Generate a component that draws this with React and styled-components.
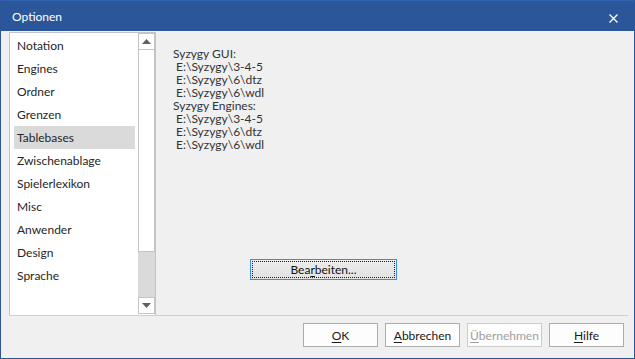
import React from "react";
import styled, { createGlobalStyle } from "styled-components";

const Global = createGlobalStyle`
  html, body { margin: 0; padding: 0; background: #f0f0f0; }
  body { font-family: "Segoe UI", Lato, "Noto Sans", sans-serif; font-size: 12px; color: #1a1a1a; }
  * { box-sizing: border-box; }
`;

const Window = styled.div`
  width: 635px;
  height: 359px;
  display: flex;
  flex-direction: column;
  background: #f0f0f0;
  border: 1px solid #2b579a;
  border-top: none;
`;

const TitleBar = styled.div`
  height: 31px;
  flex: none;
  background: #2b579a;
  border-top: 1px solid #2e63b0;
  display: flex;
  align-items: center;
  justify-content: space-between;
  padding: 0 16px 0 11px;
  color: #fff;
`;

const Title = styled.span`
  font-size: 12px;
`;

const CloseBtn = styled.svg`
  width: 9px;
  height: 9px;
  margin-top: 5px;
`;

const Main = styled.div`
  flex: 1;
  display: flex;
  flex-direction: column;
  padding: 1px 6px 0 8px;
`;

const Content = styled.div`
  height: 284px;
  display: flex;
  border-bottom: 1px solid #cfcfcf;
`;

const ListBox = styled.div`
  width: 147px;
  height: 283px;
  display: flex;
  background: #fff;
  border: 1px solid #c4c4c4;
  border-bottom: none;
`;

const Items = styled.ul`
  list-style: none;
  margin: 0;
  padding: 1px 3px 0 4px;
  flex: 1;
`;

const Item = styled.li`
  height: 23px;
  line-height: 23px;
  padding-left: 3px;
  background: ${(p) => (p.$selected ? "#dadada" : "transparent")};
  color: #262626;
`;

const ScrollBar = styled.div`
  width: 17px;
  display: flex;
  flex-direction: column;
  padding-bottom: 1px;
`;

const ScrollBtn = styled.div`
  height: 17px;
  flex: none;
  border: 1px solid #c4c4c4;
  background: #fff;
  display: flex;
  align-items: center;
  justify-content: center;
`;

const Thumb = styled.div`
  height: 202px;
  flex: none;
  border: 1px solid #c4c4c4;
  border-top: none;
  background: #fff;
`;

const Track = styled.div`
  flex: 1;
  background: #dadada;
`;

const Panel = styled.div`
  flex: 1;
  display: flex;
  flex-direction: column;
  padding: 15px 0 0 17px;
`;

const Paths = styled.div`
  line-height: 13px;
  color: #333;
  white-space: pre;
`;

const EditRow = styled.div`
  margin-top: 108px;
  padding-left: 77px;
`;

const EditButton = styled.button`
  width: 147px;
  height: 21px;
  padding: 1px;
  border: 1px solid #3c8ee0;
  background: linear-gradient(#ececec, #e2e2e2);
  font: inherit;
  color: #111;
  display: flex;
`;

const Focus = styled.span`
  flex: 1;
  border: 1px dotted #222;
  display: flex;
  align-items: center;
  justify-content: center;
  line-height: 1;
`;

const Footer = styled.div`
  display: flex;
  justify-content: flex-end;
  gap: 7px;
  padding: 7px 4px 0 0;
`;

const Btn = styled.button`
  width: 75px;
  height: 24px;
  border: 1px solid ${(p) => (p.disabled ? "#cccccc" : "#adadad")};
  background: #fdfdfd;
  font: inherit;
  color: ${(p) => (p.disabled ? "#a0a0a0" : "#1a1a1a")};
  padding: 0;
`;

const U = styled.span`
  text-decoration: underline;
  text-underline-offset: 2px;
`;

const Up = () => (
  <svg width="9" height="5" viewBox="0 0 9 5"><path d="M0 5 L4.5 0 L9 5 Z" fill="#606060" /></svg>
);
const Down = () => (
  <svg width="9" height="5" viewBox="0 0 9 5"><path d="M0 0 L4.5 5 L9 0 Z" fill="#606060" /></svg>
);

const items = ["Notation", "Engines", "Ordner", "Grenzen", "Tablebases", "Zwischenablage", "Spielerlexikon", "Misc", "Anwender", "Design", "Sprache"];

const text = `Syzygy GUI:
 E:\\Syzygy\\3-4-5
 E:\\Syzygy\\6\\dtz
 E:\\Syzygy\\6\\wdl
Syzygy Engines:
 E:\\Syzygy\\3-4-5
 E:\\Syzygy\\6\\dtz
 E:\\Syzygy\\6\\wdl`;

export default function App() {
  return (
    <>
      <Global />
      <Window>
        <TitleBar>
          <Title>Optionen</Title>
          <CloseBtn viewBox="0 0 9 9"><path d="M0.5 0.5 L8.5 8.5 M8.5 0.5 L0.5 8.5" stroke="#fff" strokeWidth="1.3" /></CloseBtn>
        </TitleBar>
        <Main>
          <Content>
            <ListBox>
              <Items>
                {items.map((it) => (
                  <Item key={it} $selected={it === "Tablebases"}>{it}</Item>
                ))}
              </Items>
              <ScrollBar>
                <ScrollBtn><Up /></ScrollBtn>
                <Thumb />
                <Track />
                <ScrollBtn><Down /></ScrollBtn>
              </ScrollBar>
            </ListBox>
            <Panel>
              <Paths>{text}</Paths>
              <EditRow>
                <EditButton><Focus>Bea<U>r</U>beiten...</Focus></EditButton>
              </EditRow>
            </Panel>
          </Content>
          <Footer>
            <Btn><U>O</U>K</Btn>
            <Btn><U>A</U>bbrechen</Btn>
            <Btn disabled><U>Ü</U>bernehmen</Btn>
            <Btn><U>H</U>ilfe</Btn>
          </Footer>
        </Main>
      </Window>
    </>
  );
}
